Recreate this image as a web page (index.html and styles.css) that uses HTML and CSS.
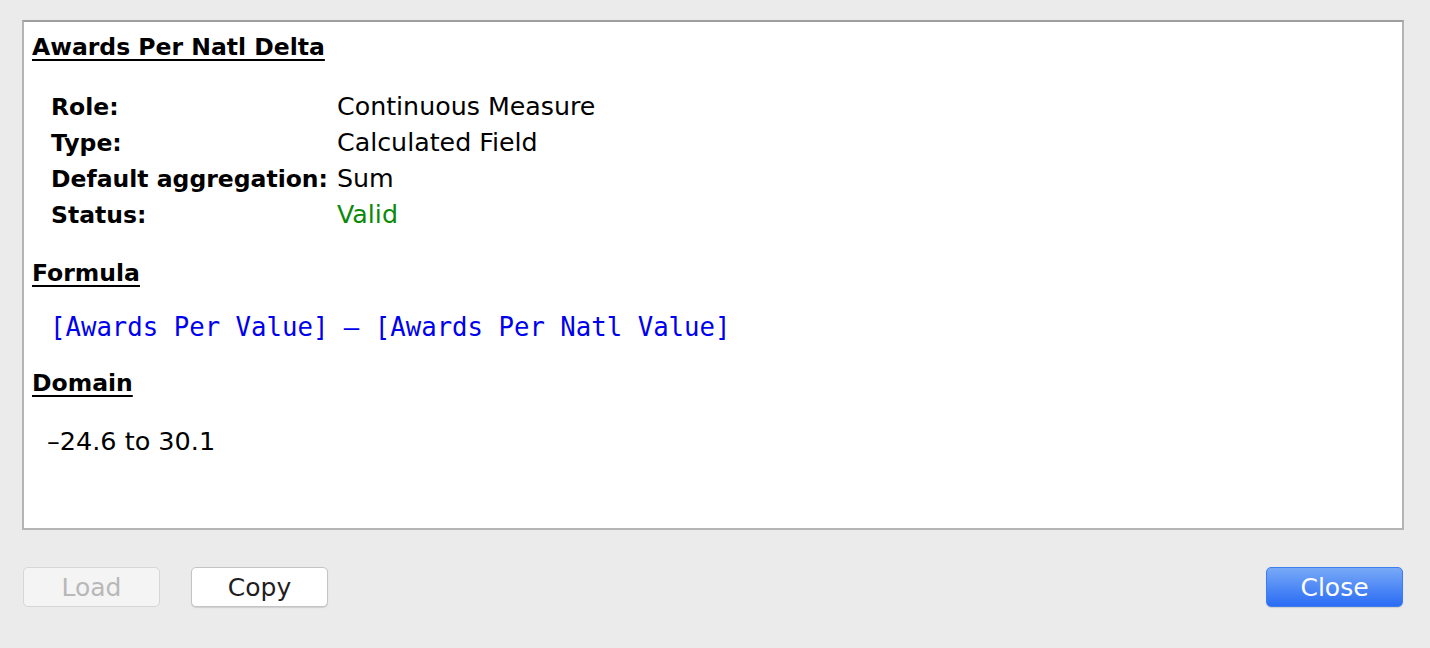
FILE: index.html
```html
<!DOCTYPE html>
<html>
<head>
<meta charset="utf-8">
<link rel="stylesheet" href="styles.css">
</head>
<body>
<div class="dialog">
  <div class="panel">
    <h1 class="heading title">Awards Per Natl Delta</h1>
    <div class="props">
      <div class="label">Role:</div><div class="value">Continuous Measure</div>
      <div class="label">Type:</div><div class="value">Calculated Field</div>
      <div class="label">Default aggregation:</div><div class="value">Sum</div>
      <div class="label">Status:</div><div class="value valid">Valid</div>
    </div>
    <h2 class="heading formula-h">Formula</h2>
    <div class="formula">[Awards Per Value] – [Awards Per Natl Value]</div>
    <h2 class="heading domain-h">Domain</h2>
    <div class="domain">–24.6 to 30.1</div>
  </div>
  <div class="buttons">
    <button class="btn disabled">Load</button>
    <button class="btn">Copy</button>
    <span class="spacer"></span>
    <button class="btn primary">Close</button>
  </div>
</div>
</body>
</html>
```
FILE: styles.css
```css
html, body {
  margin: 0;
  padding: 0;
  background: #ebebeb;
}
body {
  font-family: "DejaVu Sans", "Liberation Sans", sans-serif;
  color: #000;
}
.dialog {
  width: 1430px;
  height: 648px;
  padding: 20px 26px 0 22px;
  box-sizing: border-box;
  display: flex;
  flex-direction: column;
}
.panel {
  height: 510px;
  box-sizing: border-box;
  background: #fff;
  border: 2px solid #b4b4b4;
  border-top-color: #9e9e9e;
  padding: 8px 10px 0 8px;
}
.heading {
  margin: 0;
  font-size: 23.5px;
  font-weight: bold;
  text-decoration: underline;
  text-decoration-thickness: 2px;
  text-underline-offset: 4px;
  line-height: 34px;
}
.title {
  margin-bottom: 25px;
}
.props {
  display: grid;
  grid-template-columns: 286px auto;
  margin-left: 19px;
  font-size: 25.3px;
  line-height: 36px;
}
.label {
  font-weight: bold;
  font-size: 23.5px;
}
.valid {
  color: #0a8a0a;
}
.formula-h {
  margin-top: 23px;
}
.formula {
  font-family: "DejaVu Sans Mono", "Liberation Mono", monospace;
  color: #0000f0;
  font-size: 25.7px;
  line-height: 36px;
  margin: 19px 0 0 18px;
}
.domain-h {
  margin-top: 21px;
}
.domain {
  font-size: 25.5px;
  line-height: 36px;
  margin: 23px 0 0 15px;
}
.buttons {
  display: flex;
  align-items: center;
  gap: 31px;
  margin-top: 37px;
  padding-left: 1px;
  padding-right: 1px;
}
.spacer {
  flex: 1;
}
.btn {
  width: 137px;
  height: 40px;
  border-radius: 5px;
  border: 1px solid #c4c4c4;
  background: #fff;
  font-family: "DejaVu Sans", "Liberation Sans", sans-serif;
  font-size: 25px;
  color: #1e1e1e;
  padding: 0;
  box-shadow: 0 1px 1px rgba(0,0,0,0.12);
}
.btn.disabled {
  background: #f4f4f4;
  color: #b8b8b8;
  border-color: #d6d6d6;
  box-shadow: none;
}
.btn.primary {
  color: #fff;
  border-color: #3a7ef0;
  background: linear-gradient(#78a9f7, #2a6cf5);
}
```
